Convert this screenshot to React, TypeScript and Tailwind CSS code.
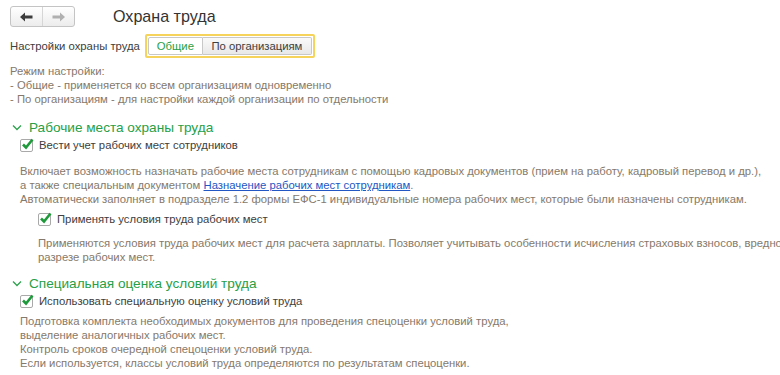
import React from "react";

const font = { fontFamily: '"Liberation Sans", Arial, sans-serif' };

function NavButtons() {
  return (
    <div className="flex h-[21px] w-[65px] rounded-[3px] border border-[#c4c4c4] bg-gradient-to-b from-white to-[#ececec]">
      <div className="flex w-[32px] items-center justify-center border-r border-[#d6d6d6]">
        <svg width="13" height="10" viewBox="0 0 13 10">
          <path d="M0 5 L5 0.5 L5 3.5 L12.5 3.5 L12.5 6.5 L5 6.5 L5 9.5 Z" fill="#3c3c3c" />
        </svg>
      </div>
      <div className="flex flex-1 items-center justify-center">
        <svg width="13" height="10" viewBox="0 0 13 10">
          <path d="M13 5 L8 0.5 L8 3.5 L0.5 3.5 L0.5 6.5 L8 6.5 L8 9.5 Z" fill="#b0b0b0" />
        </svg>
      </div>
    </div>
  );
}

function Check({ label }: { label: string }) {
  return (
    <div className="flex h-[14px] items-center gap-[6px]">
      <div className="relative h-[13px] w-[13px] rounded-[2px] border border-[#a9a9a9] bg-white">
        <svg className="absolute -top-[2px] left-[0px]" width="14" height="13" viewBox="0 0 14 13">
          <path d="M2 6.5 L5 9.5 L11.5 1.5" fill="none" stroke="#1e9a3a" strokeWidth="2.6" />
        </svg>
      </div>
      <span className="text-[11.3px] leading-[14px] text-[#404040]">{label}</span>
    </div>
  );
}

function SectionHeader({ title }: { title: string }) {
  return (
    <div className="flex h-[18px] items-center gap-[7px] pl-[12px]">
      <svg width="10" height="6" viewBox="0 0 10 6">
        <path d="M1 0.5 L5 4.5 L9 0.5" fill="none" stroke="#2ea24e" strokeWidth="1.3" />
      </svg>
      <span className="text-[13.6px] leading-[18px] text-[#27a047]">{title}</span>
    </div>
  );
}

export default function App() {
  const note = "whitespace-nowrap text-[11.3px] leading-[14px] text-[#85796b]";
  return (
    <div className="h-[375px] w-[780px] overflow-hidden bg-white" style={font}>
      <div className="flex items-center pl-[10px] pt-[6px]">
        <NavButtons />
        <h1 className="ml-[38px] text-[16.1px] leading-[21px] text-[#333]">Охрана труда</h1>
      </div>

      <div className="mt-[7px] flex items-center pl-[10px]">
        <span className="text-[11.3px] text-[#404040]">Настройки охраны труда</span>
        <div className="ml-[5px] flex rounded-[2px] border-2 border-[#f6d35a] p-[1px]">
          <button className="h-[18px] w-[55px] rounded-l-[2px] border border-[#c8c8c8] bg-white text-[11.3px] leading-[16px] text-[#27a047]">
            Общие
          </button>
          <button className="h-[18px] w-[109px] rounded-r-[2px] border border-l-0 border-[#c8c8c8] bg-gradient-to-b from-[#fafafa] to-[#e8e8e8] text-[11.3px] leading-[16px] text-[#404040]">
            По организациям
          </button>
        </div>
      </div>

      <div className={`mt-[6px] pl-[10px] ${note}`}>
        <p>Режим настройки:</p>
        <p>- Общие - применяется ко всем организациям одновременно</p>
        <p>- По организациям - для настройки каждой организации по отдельности</p>
      </div>

      <div className="mt-[13px]">
        <SectionHeader title="Рабочие места охраны труда" />
        <div className="mt-[1px] pl-[20px]">
          <Check label="Вести учет рабочих мест сотрудников" />
        </div>
        <div className={`mt-[12px] pl-[20px] ${note}`}>
          <p>
            Включает возможность назначать рабочие места сотрудникам с помощью кадровых документов (прием на работу, кадровый перевод и др.),
          </p>
          <p>
            а также специальным документом{" "}
            <a className="text-[#2357c4] underline" href="#">
              Назначение рабочих мест сотрудникам
            </a>
            .
          </p>
          <p>Автоматически заполняет в подразделе 1.2 формы ЕФС-1 индивидуальные номера рабочих мест, которые были назначены сотрудникам.</p>
        </div>
        <div className="mt-[6px] pl-[38px]">
          <Check label="Применять условия труда рабочих мест" />
          <div className={`mt-[10px] ${note}`}>
            <p>Применяются условия труда рабочих мест для расчета зарплаты. Позволяет учитывать особенности исчисления страховых взносов, вредности и др. в</p>
            <p>разрезе рабочих мест.</p>
          </div>
        </div>
      </div>

      <div className="mt-[11px]">
        <SectionHeader title="Специальная оценка условий труда" />
        <div className="mt-[1px] pl-[20px]">
          <Check label="Использовать специальную оценку условий труда" />
        </div>
        <div className={`mt-[6px] pl-[20px] ${note}`}>
          <p>Подготовка комплекта необходимых документов для проведения спецоценки условий труда,</p>
          <p>выделение аналогичных рабочих мест.</p>
          <p>Контроль сроков очередной спецоценки условий труда.</p>
          <p>Если используется, классы условий труда определяются по результатам спецоценки.</p>
        </div>
      </div>
    </div>
  );
}
